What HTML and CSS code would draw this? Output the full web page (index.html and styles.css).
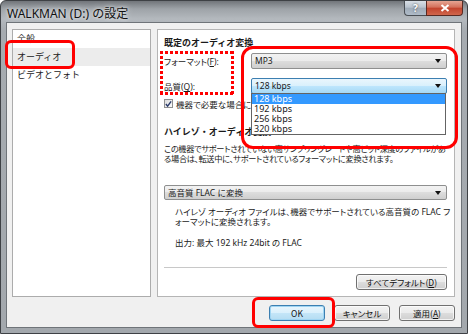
FILE: index.html
```html
<!DOCTYPE html>
<html>
  <head>
    <meta charset="utf-8">
    <link rel="stylesheet" href="styles.css">
  </head>
  <body>
    <div class="window">
      <div class="titlebar">
        <span class="title">WALKMAN (D:) の設定</span>
        <div class="caption-buttons">
          <span class="cap help">?</span>
          <span class="cap close">
            <svg width="10" height="8" viewBox="0 0 10 8"><path d="M1.5 1 L8.5 7 M8.5 1 L1.5 7" stroke="#fff" stroke-width="2"/></svg>
          </span>
        </div>
      </div>
      <div class="client">
        <div class="main">
          <ul class="nav">
            <li>全般</li>
            <li class="selected">オーディオ</li>
            <li>ビデオとフォト</li>
          </ul>
          <div class="page">
            <h2>既定のオーディオ変換</h2>
            <div class="field-row">
              <label>フォーマット(<u>F</u>):</label>
              <div class="combo">MP3</div>
            </div>
            <div class="field-row quality">
              <label>品質(<u>Q</u>):</label>
              <div class="combo hot">128 kbps</div>
            </div>
            <div class="check">
              <span class="box">
                <svg width="8" height="8" viewBox="0 0 8 8"><path d="M1 4 L3 6.5 L7 1" fill="none" stroke="#2a3a6a" stroke-width="1.6"/></svg>
              </span>
              <span>機器で必要な場合にファイルを変換する</span>
            </div>
            <h2 class="hires">ハイレゾ・オーディオ変換</h2>
            <p class="desc">この機器でサポートされていない高サンプリングレートや高ビット深度のファイルがあ<br>る場合は、転送中に、サポートされているフォーマットに変換されます。</p>
            <div class="combo wide">高音質 FLAC に変換</div>
            <p class="indent">ハイレゾ オーディオ ファイルは、機器でサポートされている高音質の FLAC フ<br>ォーマットに変換されます。</p>
            <p class="indent output">出力: 最大 192 kHz 24bit の FLAC</p>
            <hr>
            <div class="page-actions">
              <button class="btn">すべてデフォルト(<u>D</u>)</button>
            </div>
            <ul class="dropdown">
              <li class="active">128 kbps</li>
              <li>192 kbps</li>
              <li>256 kbps</li>
              <li>320 kbps</li>
            </ul>
          </div>
        </div>
        <div class="actions">
          <button class="btn default">OK</button>
          <button class="btn">キャンセル</button>
          <button class="btn">適用(<u>A</u>)</button>
        </div>
      </div>
    </div>

    <div class="mark mark-nav"></div>
    <div class="mark mark-labels"></div>
    <div class="mark mark-combos"></div>
    <div class="mark mark-ok"></div>
  </body>
</html>
```

FILE: styles.css
```css
body {
    margin: 0;
    width: 468px;
    height: 334px;
    overflow: hidden;
    position: relative;
    background: #fff;
    font-family: "Noto Sans", "Noto Sans CJK JP", sans-serif;
    font-size: 8.5px;
    color: #1a1a1a;
}

.window {
    height: 334px;
    box-sizing: border-box;
    border: 1px solid #3e4145;
    border-radius: 6px 6px 0 0;
    padding: 0 5px 5px;
    display: flex;
    flex-direction: column;
    background: linear-gradient(#71757a, #9ea3a8 8px, #b4b9be 18px, #a6abb0 30px, #a3a8ad);
}

.titlebar {
    height: 21px;
    display: flex;
    justify-content: space-between;
    align-items: flex-start;
}

.title {
    padding: 3px 0 0 1px;
    font-size: 12px;
    color: #111;
    text-shadow: 0 0 6px #e6e9ec, 0 0 3px #e6e9ec;
}

.caption-buttons {
    display: flex;
    margin-right: -1px;
}

.cap {
    height: 14px;
    display: flex;
    align-items: center;
    justify-content: center;
    border: 1px solid #4a4f55;
    border-top: none;
}

.help {
    width: 21px;
    border-radius: 0 0 0 4px;
    border-right: none;
    background: linear-gradient(#d9dfe6, #b9c3ce 45%, #9fabb8 50%, #b0bcc9);
    color: #fff;
    font-size: 10px;
    font-weight: bold;
    text-shadow: 0 0 2px #333;
}

.close {
    width: 35px;
    border-radius: 0 0 4px 0;
    background: linear-gradient(#e6a593, #d3705a 45%, #c2432c 50%, #d0664c);
    border-color: #5a2a22;
}

.client {
    flex: 1;
    background: #f0f0f0;
    border: 1px solid #6f7479;
    padding: 6px 6px 0 5px;
    display: flex;
    flex-direction: column;
}

.main {
    height: 268px;
    display: flex;
    gap: 6px;
}

.nav {
    flex: none;
    width: 139px;
    box-sizing: border-box;
    margin: 0;
    padding: 0;
    list-style: none;
    background: #fff;
    border: 1px solid #acacac;
    font-family: "Noto Sans CJK JP", sans-serif;
    font-size: 9px;
}

.nav li {
    height: 18px;
    line-height: 17px;
    padding-left: 4px;
}

.nav .selected {
    background: #ececec;
}

.page {
    flex: 1;
    min-width: 0;
    position: relative;
    background: #fff;
    border: 1px solid #b5b5b5;
    padding: 7px 7px 6px 6px;
    display: flex;
    flex-direction: column;
}

h2 {
    margin: 0;
    font-family: "Noto Sans CJK JP", sans-serif;
    font-size: 9px;
    font-weight: bold;
    line-height: 12px;
    white-space: nowrap;
}

.field-row {
    display: flex;
    align-items: center;
    margin-top: 4px;
}

.field-row.quality {
    margin-top: 9px;
}

.field-row label {
    width: 87px;
    font-feature-settings: "palt";
}

.combo {
    flex: 1;
    height: 14px;
    line-height: 14px;
    position: relative;
    padding-left: 3px;
    border: 1px solid #8e8f8f;
    border-radius: 2px;
    background: linear-gradient(#f2f2f2, #ebebeb 50%, #dddddd 50%, #cfcfcf);
}

.combo::after {
    content: "";
    position: absolute;
    right: 5px;
    top: 5px;
    border-left: 3px solid transparent;
    border-right: 3px solid transparent;
    border-top: 4px solid #111;
}

.combo.hot {
    border-color: #3c7fb1;
    background: linear-gradient(#eaf6fd, #d9f0fc 50%, #bee6fd 50%, #a7d9f5);
}

.check {
    display: flex;
    align-items: center;
    gap: 3px;
    margin-top: 4px;
    height: 11px;
    white-space: nowrap;
    font-feature-settings: "palt";
}

.box {
    flex: none;
    width: 9px;
    height: 9px;
    box-sizing: border-box;
    border: 1px solid #8f8f8f;
    background: linear-gradient(135deg, #dcdcdc, #fbfbfb);
    display: flex;
    align-items: center;
    justify-content: center;
}

.hires {
    margin-top: 17px;
}

.desc {
    margin: 6px 0 0;
    font-size: 8.2px;
    line-height: 10px;
    white-space: nowrap;
    letter-spacing: -0.3px;
    font-feature-settings: "palt";
}

.combo.wide {
    flex: none;
    margin-top: 21px;
    height: 13px;
    line-height: 13px;
}

.indent {
    margin: 7px 0 0 11px;
    line-height: 10px;
    white-space: nowrap;
    font-feature-settings: "palt";
}

.indent.output {
    margin-top: 11px;
}

hr {
    width: 100%;
    margin: auto 0 0;
    border: none;
    border-top: 1px solid #c8c8c8;
}

.page-actions {
    display: flex;
    justify-content: flex-end;
    margin-top: 6px;
}

.btn {
    height: 16px;
    padding: 0;
    font-family: "Noto Sans CJK JP", sans-serif;
    font-size: 8.5px;
    color: #111;
    border: 1px solid #707070;
    border-radius: 3px;
    background: linear-gradient(#f2f2f2, #ebebeb 50%, #dddddd 50%, #cfcfcf);
    box-shadow: inset 0 0 0 1px rgba(255, 255, 255, 0.7);
    font-feature-settings: "palt";
}

.page-actions .btn {
    width: 91px;
}

.actions {
    margin-top: 8px;
    display: flex;
    justify-content: flex-end;
    gap: 9px;
}

.actions .btn {
    width: 56px;
}

.btn.default {
    border-color: #3c7fb1;
    background: linear-gradient(#eaf6fd, #d9f0fc 50%, #c4e6f8 50%, #b4dcf2);
    box-shadow: inset 0 0 0 1px #9fd5f3;
}

.dropdown {
    position: absolute;
    left: 93px;
    top: 63px;
    width: 195px;
    box-sizing: border-box;
    margin: 0;
    padding: 0;
    list-style: none;
    background: #fff;
    border: 1px solid #646464;
}

.dropdown li {
    height: 10px;
    line-height: 10px;
    padding-left: 2px;
    font-size: 9px;
}

.dropdown .active {
    background: #3399ff;
    color: #fff;
}

.mark {
    position: absolute;
    box-sizing: border-box;
    border: 3px solid #ff0000;
}

.mark-nav {
    left: 5px;
    top: 40px;
    width: 70px;
    height: 29px;
    border-radius: 6px;
}

.mark-labels {
    left: 160px;
    top: 51px;
    width: 74px;
    height: 44px;
    border: none;
    background:
        repeating-linear-gradient(90deg, #ff0000 0 3px, transparent 3px 5px) top left / 100% 3px no-repeat,
        repeating-linear-gradient(90deg, #ff0000 0 3px, transparent 3px 5px) bottom left / 100% 3px no-repeat,
        repeating-linear-gradient(180deg, #ff0000 0 3px, transparent 3px 5px) top left / 3px 100% no-repeat,
        repeating-linear-gradient(180deg, #ff0000 0 3px, transparent 3px 5px) top right / 3px 100% no-repeat;
}

.mark-combos {
    left: 241px;
    top: 46px;
    width: 217px;
    height: 103px;
    border-radius: 12px;
}

.mark-ok {
    left: 252px;
    top: 297px;
    width: 83px;
    height: 31px;
    border-radius: 6px;
}
```
